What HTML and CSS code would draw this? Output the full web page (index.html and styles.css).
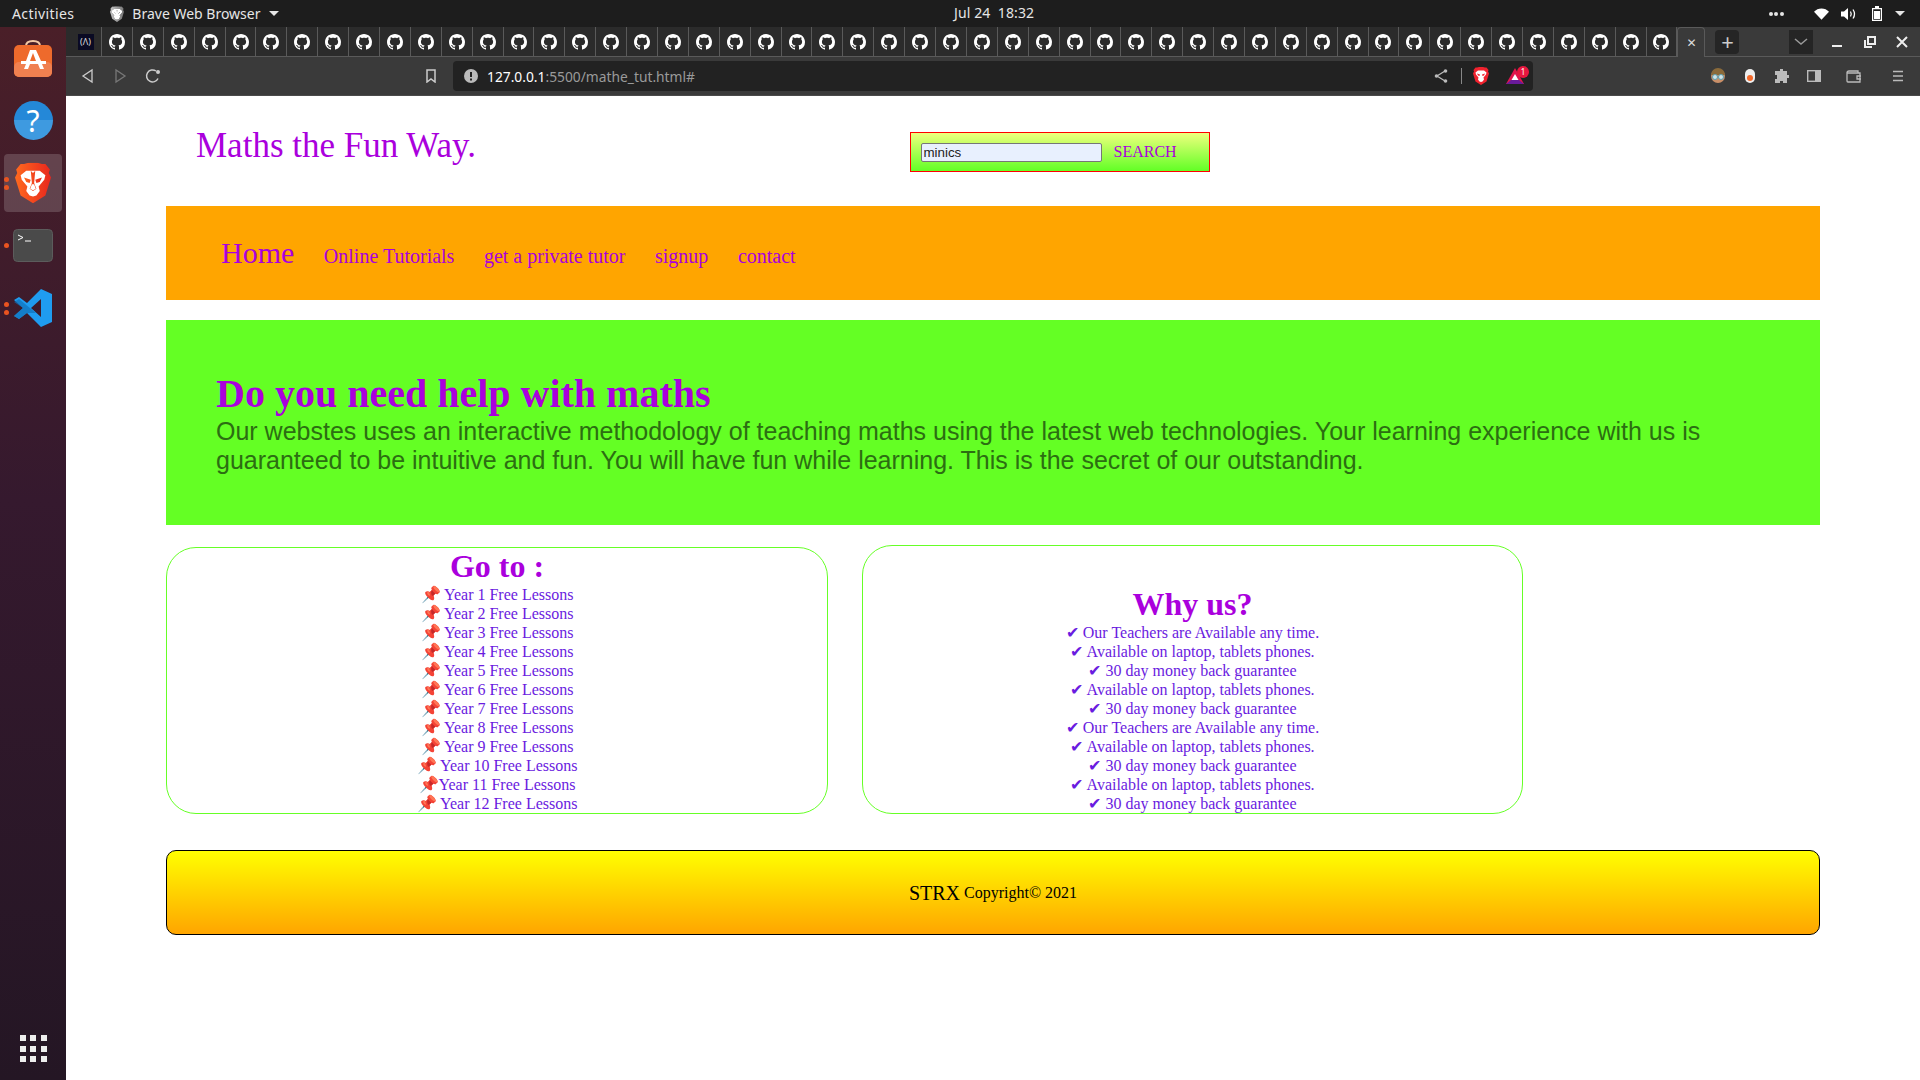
FILE: index.html
```html
<!DOCTYPE html>
<html lang="en">
<head>
<meta charset="utf-8">
<title>Maths the Fun Way.</title>
<link rel="stylesheet" href="styles.css">
</head>
<body>
<svg class="defs" width="0" height="0" aria-hidden="true">
  <defs><linearGradient id="bravefill" x1="0" y1="0" x2="1" y2="0"><stop offset="0" stop-color="#ff6a1f"/><stop offset="1" stop-color="#e8261d"/></linearGradient></defs>
  <symbol id="gh" viewBox="0 0 16 16"><path fill="#fff" d="M8 0C3.58 0 0 3.58 0 8c0 3.54 2.29 6.53 5.47 7.59.4.07.55-.17.55-.38 0-.19-.01-.82-.01-1.49-2.01.37-2.53-.49-2.69-.94-.09-.23-.48-.94-.82-1.13-.28-.15-.68-.52-.01-.53.63-.01 1.08.58 1.23.82.72 1.21 1.87.87 2.33.66.07-.52.28-.87.51-1.07-1.78-.2-3.64-.89-3.64-3.95 0-.87.31-1.59.82-2.15-.08-.2-.36-1.02.08-2.12 0 0 .67-.21 2.2.82.64-.18 1.32-.27 2-.27s1.36.09 2 .27c1.53-1.04 2.2-.82 2.2-.82.44 1.1.16 1.92.08 2.12.51.56.82 1.27.82 2.15 0 3.07-1.87 3.75-3.65 3.95.29.25.54.73.54 1.48 0 1.07-.01 1.93-.01 2.2 0 .21.15.46.55.38A8.01 8.01 0 0 0 16 8c0-4.42-3.58-8-8-8z"/></symbol>
  <symbol id="lion" viewBox="0 0 32 36"><path fill="url(#bravefill)" d="M8 1l4-1h8l4 1 3 0 4 5-1 3 2 4-5 16-11 7-11-7L0 13l2-4-1-3 4-5z"/><path fill="#fff" d="M10 7h12l5 4-1 4-5 6 1 4-3 4-3 1-3-1-3-4 1-4-5-6-1-4z"/><path fill="url(#bravefill)" d="M8 13l6 2-1 3-3-1zM24 13l-6 2 1 3 3-1zM14 7l2 2 2-2-1 11 2 5-3 2-3-2 2-5z"/><path fill="#fff" d="M15 19h2l1.500 4-2.500 1.500-2.500-1.500z"/></symbol>
</svg>

<header class="topbar">
  <span class="activities">Activities</span>
  <span class="appmenu">
    <svg class="applogo" viewBox="0 0 32 36"><use href="#lion"/></svg>
    Brave Web Browser
    <i class="caret"></i>
  </span>
  <span class="clock">Jul 24&nbsp;&nbsp;18:32</span>
  <span class="tray">
    <span class="dots"><i></i><i></i><i></i></span>
    <svg class="ti wifi" viewBox="0 0 16 12"><path fill="#fff" d="M0 3.5C2 1.3 5 0 8 0s6 1.3 8 3.5L8 12z"/></svg>
    <svg class="ti" viewBox="0 0 16 14"><path fill="#fff" d="M0 4.5h3L7 1v12L3 9.500H0z"/><path fill="none" stroke="#fff" stroke-width="1.300" d="M9.500 4.500q1.500 2.500 0 5M12 2.500q3 4.500 0 9"/></svg>
    <svg class="ti batt" viewBox="0 0 10 15"><path fill="none" stroke="#fff" stroke-width="1.200" d="M.6 2.600h8.800v11.800H.6z"/><path fill="#fff" d="M3 0h4v2H3zM2 5h6v8H2z"/></svg>
    <i class="caret big"></i>
  </span>
</header>

<div class="shell">
  <aside class="dock">
    <div class="dock-item">
      <svg width="40" height="40" viewBox="0 0 40 40"><path fill="none" stroke="#f3c9a5" stroke-width="2" d="M13 8q0-5 7-5t7 5"/><rect x="1" y="7" width="38" height="32" rx="5" fill="#ee6a2c"/><rect x="1" y="24" width="38" height="15" rx="5" fill="#f08050"/><path fill="#fff" d="M17 12h6l5 11h5v3h-4l2 5h-4l-2-5h-8l-2 5H11l2-5H8v-3h5zm3 3l-3 8h6z"/></svg>
    </div>
    <div class="dock-item">
      <span class="help">?</span>
    </div>
    <div class="dock-item active">
      <span class="pips"><i></i><i></i></span>
      <svg width="36" height="42" viewBox="0 0 32 36"><use href="#lion"/></svg>
    </div>
    <div class="dock-item">
      <span class="pips"><i></i></span>
      <svg width="40" height="33" viewBox="0 0 40 33"><rect width="39" height="32" x=".5" y=".5" rx="4" fill="#4a4a4a" stroke="#5c5c5c"/><path fill="none" stroke="#fff" d="M5 6l5 2.500L5 11"/><path stroke="#fff" d="M12 12h6"/></svg>
    </div>
    <div class="dock-item">
      <span class="pips"><i></i><i></i></span>
      <svg width="38" height="38" viewBox="0 0 38 38"><path fill="#1f9cf0" d="M27 0l11 5v28l-11 5-14-14-8 6-5-3 9-8-9-8 5-3 8 6zm0 10l-10 9 10 9z"/><path fill="#0f6fb5" d="M0 13l5-3 17 14-9 0-8 6-5-3 9-8z" opacity=".65"/></svg>
    </div>
    <div class="dock-spacer"></div>
    <div class="grid-dots"><i></i><i></i><i></i><i></i><i></i><i></i><i></i><i></i><i></i></div>
  </aside>

  <div class="window">
    <div class="tabstrip">
      <span class="tab first"><span class="fcc">(&#923;)</span></span>
      <span class="tabs" id="tabs"></span>
      <span class="tab current"><span class="x">✕</span></span>
      <span class="newtab">+</span>
      <span class="tabdown"><svg width="14" height="8" viewBox="0 0 14 8"><path fill="none" stroke="#999" stroke-width="1.500" d="M1 1l6 5 6-5"/></svg></span>
      <span class="winbtns">
        <svg width="14" height="14" viewBox="0 0 14 14"><path stroke="#eee" stroke-width="2" d="M2 11h10"/></svg>
        <svg width="14" height="14" viewBox="0 0 14 14"><path fill="none" stroke="#eee" stroke-width="2" d="M5 2h7v7H5zM2 5v7h7"/></svg>
        <svg width="14" height="14" viewBox="0 0 14 14"><path stroke="#eee" stroke-width="2" d="M2 2l10 10M12 2L2 12"/></svg>
      </span>
    </div>
    <div class="toolbar">
      <svg class="nav-ic first-ic" width="14" height="16" viewBox="0 0 14 16"><path fill="none" stroke="#ccc" stroke-width="1.300" d="M11 2v12L2 8z"/></svg>
      <svg class="nav-ic dim" width="14" height="16" viewBox="0 0 14 16"><path fill="none" stroke="#777" stroke-width="1.300" d="M3 2v12l9-6z"/></svg>
      <svg class="nav-ic" width="16" height="16" viewBox="0 0 16 16"><path fill="none" stroke="#ccc" stroke-width="1.500" d="M13 10.500A6 6 0 1 1 11 3"/><circle cx="13" cy="4" r="2" fill="#ccc"/></svg>
      <svg class="bookmark" width="12" height="14" viewBox="0 0 12 14"><path fill="none" stroke="#ccc" stroke-width="1.500" d="M2 1h8v12l-4-3-4 3z"/></svg>
      <div class="omnibox">
        <svg width="14" height="14" viewBox="0 0 14 14"><circle cx="7" cy="7" r="7" fill="#bbb"/><path stroke="#222" stroke-width="2" d="M7 3v5M7 9.500v2"/></svg>
        <span class="url"><b>127.0.0.1</b>:5500/mathe_tut.html#</span>
        <span class="omni-right">
          <svg width="14" height="14" viewBox="0 0 14 14"><path fill="none" stroke="#bbb" stroke-width="1.300" d="M11 2L3 7l8 5"/><circle cx="11.500" cy="2" r="1.800" fill="#bbb"/><circle cx="11.500" cy="12" r="1.800" fill="#bbb"/><circle cx="2.500" cy="7" r="1.800" fill="#bbb"/></svg>
          <i class="sep"></i>
          <svg class="shield" width="16" height="18" viewBox="0 0 32 36"><path fill="#f0222e" d="M8 1l4-1h8l4 1 3 0 4 5-1 3 2 4-5 16-11 7-11-7L0 13l2-4-1-3 4-5z"/><path fill="#fff" d="M10 7h12l5 4-1 4-5 6 1 4-3 4-3 1-3-1-3-4 1-4-5-6-1-4z"/><path fill="#f0222e" d="M8 13l6 2-1 3-3-1zM24 13l-6 2 1 3 3-1z"/></svg>
          <span class="rewards">
            <svg width="18" height="16" viewBox="0 0 18 16"><path fill="#e0164c" d="M9 0l9 16H0z"/><path fill="#6a1b9a" d="M0 16l5-4h8l5 4z"/><path fill="#fff" d="M9 6l3.500 6h-7z"/></svg>
            <span class="badge">1</span>
          </span>
        </span>
      </div>
      <span class="ext">
        <svg width="16" height="16" viewBox="0 0 16 16"><circle cx="8" cy="8" r="7" fill="#c98f68"/><path fill="#8a6a3a" d="M1 7a7 7 0 0 1 14 0z"/><circle cx="5" cy="9" r="2.500" fill="#cfe3e8" stroke="#5fa0b0"/><circle cx="11" cy="9" r="2.500" fill="#cfe3e8" stroke="#5fa0b0"/></svg>
        <svg class="e-pill" width="10" height="14" viewBox="0 0 10 14"><rect width="10" height="14" rx="5" fill="#eee"/><circle cx="5" cy="9" r="3" fill="#f4692a"/></svg>
        <svg class="e-puzzle" width="16" height="16" viewBox="0 0 16 16"><path fill="#bbb" d="M6 1h3v2h4v4h2v3h-2v5H9v-2H6v2H1v-4h2V7H1V3h5z"/></svg>
        <svg class="e-panel" width="14" height="12" viewBox="0 0 14 12"><rect x=".7" y=".7" width="12.600" height="10.600" fill="none" stroke="#bbb" stroke-width="1.400"/><rect x="8" y="1" width="5" height="10" fill="#bbb"/></svg>
        <svg class="e-wallet" width="16" height="13" viewBox="0 0 16 13"><path fill="none" stroke="#bbb" stroke-width="1.300" d="M1 3q0-2 2-2h9v2M1 3v8q0 1 1 1h12V3zM15 6h-4v3h4"/></svg>
        <svg class="e-menu" width="12" height="12" viewBox="0 0 12 12"><path stroke="#bbb" stroke-width="1.500" d="M1 1.500h10M1 6h10M1 10.500h10"/></svg>
      </span>
    </div>

    <main class="page">
      <div class="masthead">
        <h2 class="brand">Maths the Fun Way.</h2>
        <form class="search">
          <input class="search-input" type="text" value="minics">
          <span class="search-btn">SEARCH</span>
        </form>
      </div>
      <nav class="mainnav">
        <a class="home" href="#">Home</a>
        <a href="#">Online Tutorials</a>
        <a href="#">get a private tutor</a>
        <a href="#">signup</a>
        <a href="#">contact</a>
      </nav>
      <section class="hero">
        <h1>Do you need help with maths</h1>
        <p>Our webstes uses an interactive methodology of teaching maths using the latest web technologies. Your learning experience with us is guaranteed to be intuitive and fun. You will have fun while learning. This is the secret of our outstanding.</p>
      </section>
      <div class="cards">
        <section class="card goto">
          <h2>Go to :</h2>
          <ul>
            <li><a href="#">📌 Year 1 Free Lessons</a></li>
            <li><a href="#">📌 Year 2 Free Lessons</a></li>
            <li><a href="#">📌 Year 3 Free Lessons</a></li>
            <li><a href="#">📌 Year 4 Free Lessons</a></li>
            <li><a href="#">📌 Year 5 Free Lessons</a></li>
            <li><a href="#">📌 Year 6 Free Lessons</a></li>
            <li><a href="#">📌 Year 7 Free Lessons</a></li>
            <li><a href="#">📌 Year 8 Free Lessons</a></li>
            <li><a href="#">📌 Year 9 Free Lessons</a></li>
            <li><a href="#">📌 Year 10 Free Lessons</a></li>
            <li><a href="#">📌Year 11 Free Lessons</a></li>
            <li><a href="#">📌 Year 12 Free Lessons</a></li>
          </ul>
        </section>
        <section class="card why">
          <h2>Why us?</h2>
          <ul>
            <li>✔ Our Teachers are Available any time.</li>
            <li>✔ Available on laptop, tablets phones.</li>
            <li>✔ 30 day money back guarantee</li>
            <li>✔ Available on laptop, tablets phones.</li>
            <li>✔ 30 day money back guarantee</li>
            <li>✔ Our Teachers are Available any time.</li>
            <li>✔ Available on laptop, tablets phones.</li>
            <li>✔ 30 day money back guarantee</li>
            <li>✔ Available on laptop, tablets phones.</li>
            <li>✔ 30 day money back guarantee</li>
          </ul>
        </section>
      </div>
      <footer class="foot"><span class="strx">STRX</span> Copyright© 2021</footer>
    </main>
  </div>
</div>
<script src="tabs.js"></script>
</body>
</html>
```
FILE: tabs.js
```js
var host = document.getElementById('tabs');
for (var i = 0; i < 51; i++) {
  var t = document.createElement('span');
  t.className = 'tab';
  t.innerHTML = '<svg width="16" height="16" viewBox="0 0 16 16"><use href="#gh"/></svg>';
  host.appendChild(t);
}
```
FILE: styles.css
```css
* { box-sizing: border-box; }
html, body { margin: 0; height: 100%; }
body { width: 1920px; height: 1080px; overflow: hidden; background: #fff; font-family: "Liberation Serif", serif; display: flex; flex-direction: column; }
.defs { position: absolute; }

.topbar { height: 27px; background: #1d1d1d; color: #e6e6e6; font: 14px "Noto Sans", sans-serif; display: flex; align-items: center; position: relative; flex: none; }
.activities { margin-left: 12px; letter-spacing: .4px; }
.appmenu { margin-left: 36px; display: flex; align-items: center; gap: 8px; }
.applogo { width: 14px; height: 16px; filter: grayscale(1) brightness(1.5); }
.caret { width: 0; height: 0; border: 5px solid transparent; border-top: 5px solid #e6e6e6; border-bottom: 0; display: inline-block; }
.clock { position: absolute; left: 954px; top: 4px; line-height: 18px; letter-spacing: .1px; }
.tray { margin-left: auto; display: flex; align-items: center; }
.dots { display: flex; gap: 1.500px; margin-right: 30px; }
.dots i { width: 4px; height: 4px; border-radius: 50%; background: #e6e6e6; display: block; }
.ti { width: 16px; height: 14px; margin-right: 15px; }
.ti.wifi { width: 15px; height: 12px; margin-right: 12.500px; }
.ti.batt { width: 10px; height: 15px; margin: 0 13px 0 0; }
.tray .caret { margin-right: 15px; }

.shell { flex: 1; display: flex; min-height: 0; }
.dock { width: 66px; flex: none; background: linear-gradient(180deg, #4a1f28 0%, #35192e 45%, #241624 100%); display: flex; flex-direction: column; align-items: center; padding-top: 2px; }
.dock-item { width: 58px; height: 58px; margin-bottom: 4.500px; display: flex; align-items: center; justify-content: center; position: relative; border-radius: 4px; flex: none; }
.dock-item.active { background: rgba(255,255,255,.17); }
.pips { position: absolute; left: 0; top: 0; bottom: 0; display: flex; flex-direction: column; justify-content: center; gap: 3px; }
.pips i { width: 5px; height: 5px; border-radius: 50%; background: #e95420; display: block; }
.help { width: 39px; height: 39px; border-radius: 50%; background: linear-gradient(180deg, #2488d8 50%, #3e9ae0 50%); color: #fff; font: 30px/39px "Noto Sans", sans-serif; text-align: center; }
.dock-spacer { flex: 1; }
.grid-dots { display: grid; grid-template-columns: repeat(3, 6px); gap: 4.500px; margin-bottom: 18px; }
.grid-dots i { width: 6px; height: 6px; background: #eee; display: block; }

.window { flex: 1; display: flex; flex-direction: column; min-width: 0; }
.tabstrip { height: 30px; background: #3a3a3a; border-bottom: 1px solid #5a5a5a; display: flex; align-items: stretch; flex: none; }
.tab { width: 30.900px; flex: none; background: #2b2b2b; border-right: 1px solid #5a5a5a; display: flex; align-items: center; justify-content: center; }
.tab.first { width: 36px; padding-left: 4px; }
.fcc { width: 16px; height: 16px; background: #0a0a23; color: #ddd; font: 9px "Noto Sans", sans-serif; display: flex; align-items: center; justify-content: center; }
.tabs { display: flex; }
.tab.current { width: 28px; background: #3a3a3a; border: 1px solid #5a5a5a; border-bottom: 0; border-radius: 4px 4px 0 0; margin-bottom: -1px; }
.x { color: #ddd; font: 12px "DejaVu Sans", sans-serif; }
.newtab { width: 24px; height: 24px; margin: 3px 0 0 10px; background: #252525; border-radius: 4px; color: #ccc; font: 22px/22px "Noto Sans", sans-serif; text-align: center; }
.tabdown { width: 24px; height: 24px; margin: 3px 0 0 50px; background: #252525; display: flex; align-items: center; justify-content: center; }
.winbtns { margin-left: 17px; display: flex; gap: 18.500px; align-items: center; }

.toolbar { height: 39px; background: #3a3a3a; border-bottom: 1px solid #4a4a4a; display: flex; align-items: center; flex: none; }
.nav-ic { margin-right: 18px; }
.first-ic { margin-left: 15px; }
.bookmark { margin-left: 246px; margin-right: 16px; }
.omnibox { width: 1080px; height: 30px; background: #222; border-radius: 4px; display: flex; align-items: center; padding: 0 9px 0 11px; color: #aaa; font: 13.800px "Noto Sans", sans-serif; gap: 9px; flex: none; }
.url { color: #9a9a9a; }
.url b { font-weight: 400; color: #fff; }
.omni-right { margin-left: auto; display: flex; align-items: center; }
.sep { width: 1px; height: 16px; background: #888; margin-left: 13px; }
.shield { margin-left: 11px; }
.rewards { position: relative; display: block; width: 18px; height: 16px; margin-left: 17px; }
.badge { position: absolute; right: -5px; top: -2px; width: 12px; height: 12px; border-radius: 50%; background: #e8173f; color: #fff; font: 8px/12px "Noto Sans", sans-serif; text-align: center; }
.ext { display: flex; align-items: center; margin-left: 177px; }
.e-pill { margin-left: 19px; }
.e-puzzle { margin-left: 19px; }
.e-panel { margin-left: 17px; }
.e-wallet { margin-left: 25px; }
.e-menu { margin-left: 30px; }

.page { flex: 1; padding: 0 100px; background: #fff; min-height: 0; }
.masthead { height: 110px; display: flex; align-items: flex-start; }
.brand { margin: 29px 0 0 30px; width: 714px; font-size: 35px; line-height: 42px; font-weight: 400; color: #a0d; }
.search { margin-top: 36px; width: 300px; height: 40px; border: 1.500px solid #f00; background: linear-gradient(180deg, #eeff7e, #62ff26); display: flex; align-items: center; padding-left: 9.500px; }
.search-input { width: 181px; height: 19px; padding: 0 2px; font: 13.333px "Liberation Sans", sans-serif; color: #222; background: #e8f0fe; border: 1px solid #767676; border-radius: 2px; outline: 0; }
.search-btn { margin-left: 12px; font-size: 16px; color: #a0d; }

.mainnav { height: 94px; background: #ffa500; display: flex; align-items: baseline; padding: 30px 0 0 55px; gap: 29.500px; font-size: 20px; }
.mainnav a { color: #a0d; text-decoration: none; }
.mainnav .home { font-size: 30px; }

.hero { margin-top: 20px; height: 205px; background: #64ff24; padding: 51px 50px 0; }
.hero h1 { margin: 0; font-size: 40px; line-height: 46px; color: #a0d; }
.hero p { margin: 0; font: 25px/29px "Liberation Sans", sans-serif; color: #2c6e12; }

.cards { display: flex; align-items: flex-end; margin-top: 20px; gap: 34px; }
.card { width: 662px; border: 1px solid #66ff26; border-radius: 30px; text-align: center; overflow: hidden; }
.card.goto { height: 267px; }
.card.why { height: 269px; width: 661px; padding-top: 40px; }
.card h2 { margin: 0; font-size: 32px; line-height: 37px; color: #a0d; }
.card ul { margin: 0; padding: 0; list-style: none; font-size: 16px; line-height: 19px; }
.card li a { color: #6a1be0; text-decoration: none; }
.card li { color: #6a1be0; }
.foot { margin-top: 36px; height: 85px; border: 1px solid #000; border-radius: 10px; background: linear-gradient(180deg, #ffff00, #ffa500); display: flex; align-items: center; justify-content: center; gap: 4px; font-size: 16px; color: #000; padding-top: 1px; }
.strx { font-size: 20px; }
```
